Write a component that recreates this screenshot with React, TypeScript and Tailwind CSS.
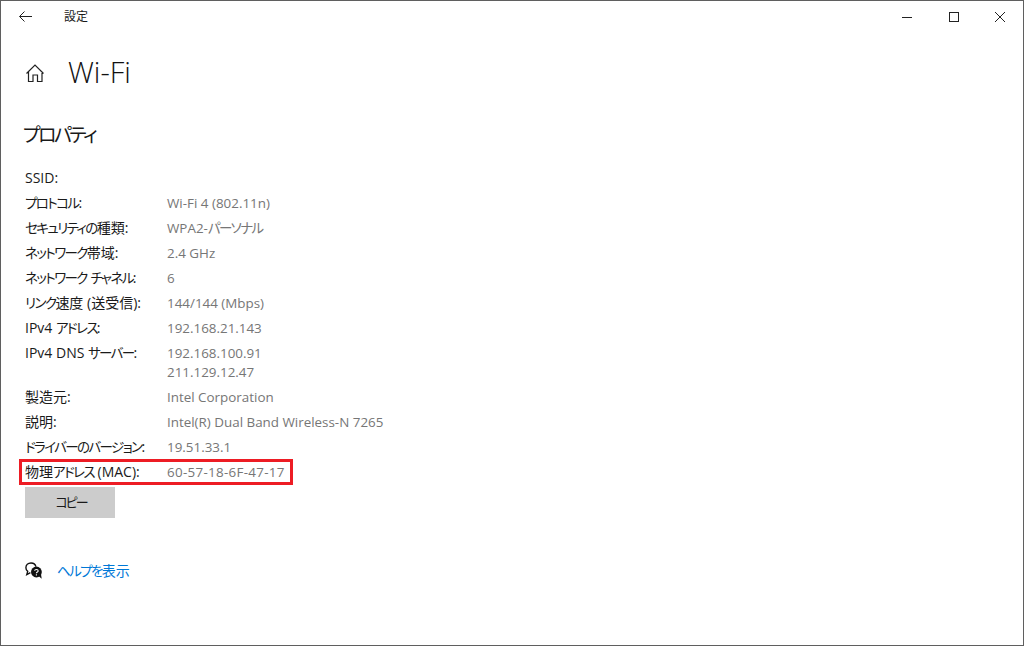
import type { ReactNode } from "react";

const rows: [string, string[]][] = [
  ["SSID:", [""]],
  ["プロトコル:", ["Wi-Fi 4 (802.11n)"]],
  ["セキュリティの種類:", ["WPA2-パーソナル"]],
  ["ネットワーク帯域:", ["2.4 GHz"]],
  ["ネットワーク チャネル:", ["6"]],
  ["リンク速度 (送受信):", ["144/144 (Mbps)"]],
  ["IPv4 アドレス:", ["192.168.21.143"]],
  ["IPv4 DNS サーバー:", ["192.168.100.91", "211.129.12.47"]],
  ["製造元:", ["Intel Corporation"]],
  ["説明:", ["Intel(R) Dual Band Wireless-N 7265"]],
  ["ドライバーのバージョン:", ["19.51.33.1"]],
  ["物理アドレス (MAC):", ["60-57-18-6F-47-17"]],
];

function T({ s }: { s: string }): ReactNode {
  return s.split(/([\u3040-\u30ff]+)/).map((p, i) =>
    i % 2 ? (
      <span key={i} className="text-[13.5px] tracking-[-1.6px] [font-feature-settings:'palt']">{p}</span>
    ) : (
      <span key={i}>{p}</span>
    ),
  );
}

export default function App() {
  return (
    <div className="h-[646px] w-[1024px] overflow-hidden border border-[#5f5f5f] bg-white font-['Open_Sans','Noto_Sans_CJK_JP',sans-serif] text-[#1a1a1a]">
      <header className="flex h-[32px] items-center">
        <svg className="-mt-px ml-[18px] h-[11px] w-[13px]" viewBox="0 0 13 11" fill="none" stroke="#222" strokeWidth="1">
          <path d="M.7 5.5H13M5.5.5l-5 5 5 5" />
        </svg>
        <span className="ml-[32px] text-[12px]">設定</span>
        <div className="ml-auto flex items-center">
          <svg className="h-[12px] w-[12px]" viewBox="0 0 12 12" stroke="#222" strokeWidth="1"><path d="M1 6.5h10" /></svg>
          <svg className="ml-[35px] h-[12px] w-[12px]" viewBox="0 0 12 12" fill="none" stroke="#222" strokeWidth="1"><rect x="1.5" y="1.5" width="9" height="9" /></svg>
          <svg className="ml-[34px] mr-[17px] h-[12px] w-[12px]" viewBox="0 0 12 12" stroke="#222" strokeWidth="1"><path d="M1 1l10 10M11 1 1 11" /></svg>
        </div>
      </header>
      <div className="flex h-[60px] items-center pl-[25px] pt-[17px]">
        <svg className="mt-[3px] h-[18px] w-[18px]" viewBox="0 0 18 18" fill="none" stroke="#222" strokeWidth="1.2">
          <path d="M.5 9.5 9 1l8.5 8.5M2.5 7.5v10H7v-6.5h4.5v6.5H16v-10" />
        </svg>
        <h1 className="ml-[24px] text-[29px] font-light leading-none text-[#111]">Wi-Fi</h1>
      </div>
      <h2 className="mt-[28px] pl-[22px] text-[19px] leading-[28px] tracking-[-2.5px] [font-feature-settings:'palt']">プロパティ</h2>
      <div className="mt-[19px] pl-[24px] text-[14px] leading-[20px]">
        {rows.map(([k, v], i) => (
          <div key={k} className="relative flex pb-[5px]">
            <div className="w-[142px] whitespace-nowrap"><T s={k} /></div>
            <div className={i === rows.length - 1 ? "text-[13.4px] tracking-[0.3px] text-[#767676]" : "text-[13.4px] text-[#767676]"}>
              {v.map((t, j) => (
                <div key={j} className={j ? "-mt-px" : ""}><T s={t || "\u00a0"} /></div>
              ))}
            </div>
            {i === rows.length - 1 && (
              <div className="absolute left-[-6px] top-[-3px] h-[26px] w-[274px] border-[3px] border-[#ed1c24]" />
            )}
          </div>
        ))}
      </div>
      <button className="ml-[24px] h-[31px] w-[90px] bg-[#cccccc] pl-[2px] text-[13px] tracking-[-2px] [font-feature-settings:'palt']">コピー</button>
      <div className="ml-[24px] mt-[42px] flex items-center">
        <svg className="h-[17px] w-[17px]" viewBox="0 0 17 17">
          <path d="M6 1C3 1 .9 3 .9 5.8c0 1.6.7 2.8 1.8 3.6L1.8 12.6l3.6-2" fill="none" stroke="#111" strokeWidth="1.4" />
          <path d="M6 1c2.6 0 4.4 1.6 4.9 3.6" fill="none" stroke="#111" strokeWidth="1.4" />
          <circle cx="11.4" cy="10" r="5.4" fill="#111" />
          <path d="m13.5 14 3.2 2.8-.8-5z" fill="#111" />
          <path d="M9.6 8.8c.2-1.7 3.6-1.7 3.6.1 0 1.2-1.8 1.1-1.8 2.4M11.4 12.2v1.2" fill="none" stroke="#fff" strokeWidth="1.1" />
        </svg>
        <a className="ml-[15px] text-[14px] text-[#0078d7]"><T s="ヘルプを" />表示</a>
      </div>
    </div>
  );
}
